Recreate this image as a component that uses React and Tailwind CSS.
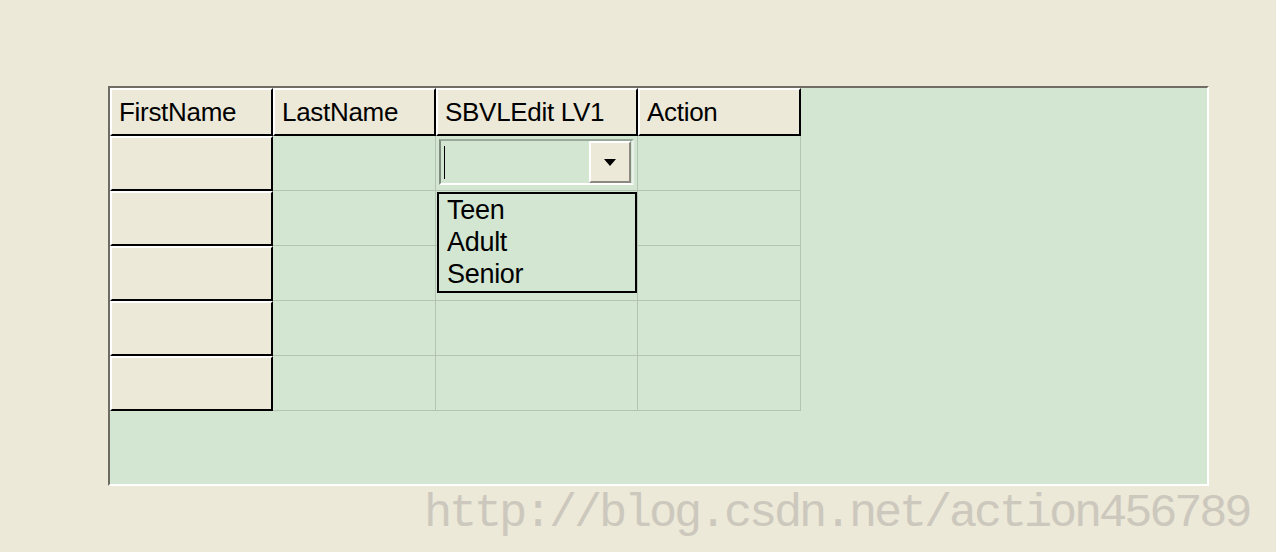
import React from 'react';

const columns = ['FirstName', 'LastName', 'SBVLEdit LV1', 'Action'];
const colWidths = ['w-[163px]', 'w-[163px]', 'w-[202px]', 'w-[163px]'];
const options = ['Teen', 'Adult', 'Senior'];

function HeaderCell({ label, width }) {
  return (
    <div
      className={`${width} h-[48px] flex items-center pl-[7px] bg-[#ece9d8] border-t-2 border-l-2 border-t-white border-l-white border-r-2 border-b-2 border-r-black border-b-black`}
    >
      <span className="text-[26px] text-black leading-none tracking-[-0.3px]">{label}</span>
    </div>
  );
}

function RowHeader() {
  return (
    <div className="w-[163px] h-[55px] bg-[#ece9d8] border-t-2 border-l-2 border-t-white border-l-white border-r-2 border-b-2 border-r-black border-b-black" />
  );
}

function DataCell({ width, children, className = '' }) {
  return (
    <div className={`${width} h-[55px] bg-[#d2e6d2] border-r border-b border-[#b3c4b3] ${className}`}>
      {children}
    </div>
  );
}

function ComboEditor() {
  return (
    <div className="relative h-full">
      <div className="mx-[3px] mt-[3px] h-[46px] flex items-center border-t-2 border-l-2 border-t-[#9aaa9a] border-l-[#7d8a7d] border-b-2 border-r-2 border-b-white border-r-[#e8f2e8]">
        <div className="ml-[3px] w-px h-[33px] bg-black" />
        <div className="ml-auto mr-[1px] w-[42px] h-[42px] bg-[#ece9d8] border-t-2 border-l-2 border-t-white border-l-white border-b-2 border-r-2 border-b-[#8c8a80] border-r-[#8c8a80] flex items-center justify-center">
          <svg width="12" height="7" viewBox="0 0 12 7">
            <path d="M0 0 H12 L6 7 Z" fill="#000" />
          </svg>
        </div>
      </div>
      <div className="absolute left-[1px] top-[53px] w-[200px] h-[101px] bg-[#d2e6d2] border-2 border-black pl-[8px] z-10">
        {options.map((opt) => (
          <div key={opt} className="h-[32px] flex items-center text-[27px] leading-none text-black tracking-[-0.3px]">
            {opt}
          </div>
        ))}
      </div>
    </div>
  );
}

export default function App() {
  const rows = [0, 1, 2, 3, 4];

  return (
    <div
      className="w-[1276px] h-[552px] bg-[#ece9d8] pt-[86px] pl-[108px] overflow-hidden"
      style={{ fontFamily: '"Liberation Sans", Arial, sans-serif' }}
    >
      <div className="w-[1101px] h-[400px] bg-[#d2e6d2] border-t-2 border-l-2 border-t-[#6f6c63] border-l-[#6e6b62] border-b-2 border-r-2 border-b-white border-r-white">
        <div className="flex">
          {columns.map((c, i) => (
            <HeaderCell key={c} label={c} width={colWidths[i]} />
          ))}
        </div>
        {rows.map((r) => (
          <div key={r} className="flex">
            <RowHeader />
            <DataCell width="w-[163px]" />
            <DataCell width="w-[202px]">{r === 0 && <ComboEditor />}</DataCell>
            <DataCell width="w-[163px]" />
          </div>
        ))}
      </div>
      <div
        className="mt-[4px] pl-[316px] text-[47px] leading-none h-[47px] tracking-[-3.2px] text-[#ccc8bd] whitespace-nowrap"
        style={{ fontFamily: '"Liberation Mono", "DejaVu Sans Mono", monospace' }}
      >
        http://blog.csdn.net/action456789
      </div>
    </div>
  );
}
